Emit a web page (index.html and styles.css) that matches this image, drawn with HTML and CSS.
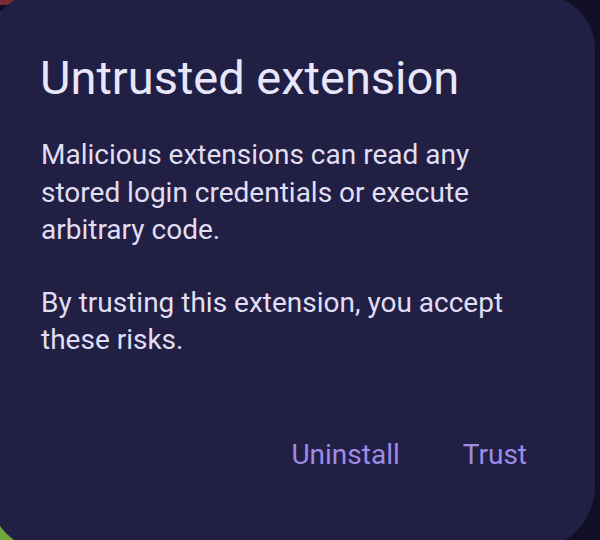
FILE: index.html
```html
<!DOCTYPE html>
<html>
<head>
<meta charset="utf-8">
<link rel="stylesheet" href="styles.css">
</head>
<body>
<div class="backdrop">
  <span class="peek peek-red"></span>
  <span class="peek peek-white"></span>
  <span class="peek peek-green"></span>
  <div class="dialog">
    <h1 class="title">Untrusted extension</h1>
    <p class="text">Malicious extensions can read any stored login credentials or execute arbitrary code.</p>
    <p class="text">By trusting this extension, you accept these risks.</p>
    <div class="actions">
      <span class="btn">Uninstall</span>
      <span class="btn">Trust</span>
    </div>
  </div>
</div>
</body>
</html>
```
FILE: styles.css
```css
html, body {
  margin: 0;
  padding: 0;
  width: 600px;
  height: 540px;
  overflow: hidden;
  background: #121026;
}
.backdrop {
  position: relative;
  width: 600px;
  height: 540px;
  overflow: hidden;
}
.peek {
  position: absolute;
}
.peek-red {
  left: 0;
  top: 0;
  width: 30px;
  height: 5px;
  background: #7a2a30;
}
.peek-white {
  left: 0;
  top: 12px;
  width: 7px;
  height: 18px;
  background: #d8d8d8;
  border-radius: 0 4px 4px 0;
}
.peek-green {
  left: 0;
  bottom: 0;
  width: 0;
  height: 0;
  border-left: 28px solid #6fa83a;
  border-top: 22px solid transparent;
}
.dialog {
  position: relative;
  box-sizing: border-box;
  margin: -6px 5px 0 -10px;
  height: 556px;
  background: #221f44;
  border-radius: 48px 56px 64px 56px;
  padding: 56px 40px 0 50px;
  font-family: Roboto, "Noto Sans", sans-serif;
}
.title {
  margin: 0;
  font-weight: 400;
  font-size: 47px;
  line-height: 56px;
  color: #e8e6fa;
  letter-spacing: 0;
}
.text {
  margin: 30px 0 0;
  font-size: 28px;
  line-height: 37.5px;
  color: #e0def3;
  width: 490px;
  padding-left: 1px;
}
.text + .text {
  margin-top: 35px;
}
.actions {
  display: flex;
  justify-content: flex-end;
  gap: 63px;
  margin-top: 79px;
  padding-right: 28px;
}
.btn {
  font-size: 28px;
  color: #9d8be6;
}
```
